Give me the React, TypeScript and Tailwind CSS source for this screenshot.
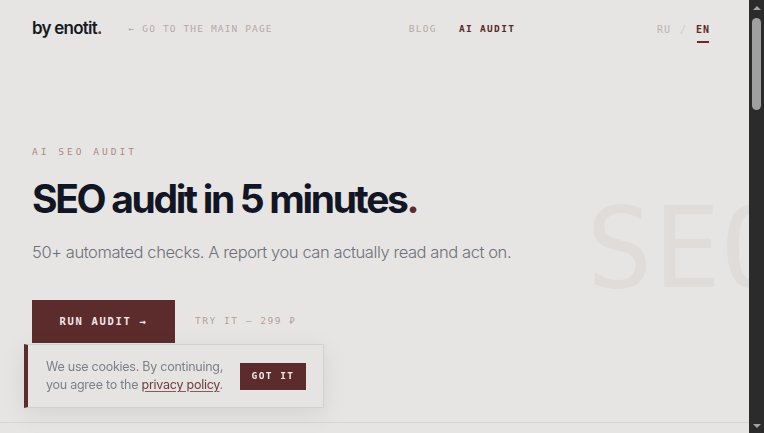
import { useState } from "react";

const mono = "font-['DejaVu_Sans_Mono','Liberation_Mono',monospace]";
const sans = "font-['Inter','Noto_Sans',sans-serif]";

/** Шапка сайта */
function Header() {
  return (
    <header className="flex items-center h-[58px] pl-8 pr-[39px]">
      <a className={`${sans} text-[17px] font-semibold tracking-[-0.045em] text-[#161a26]`}>
        by enotit<span className="text-[#6b2e2c]">.</span>
      </a>
      <a className={`${mono} ml-[27px] text-[9.5px] tracking-[0.12em] text-[#b8a7a5]`}>
        ← GO TO THE MAIN PAGE
      </a>

      <nav className={`${mono} ml-[136px] flex items-center gap-[22px] text-[9.5px] tracking-[0.14em]`}>
        <a className="text-[#b8a7a5]">BLOG</a>
        <a className="text-[#5c2a2a] font-bold">AI AUDIT</a>
      </nav>

      <div className={`${mono} ml-auto flex items-center gap-[9px] text-[10px] tracking-[0.1em]`}>
        <span className="text-[#bfb1af]">RU</span>
        <span className="text-[#d3c9c7]">/</span>
        <span className="relative font-bold text-[#5c2a2a]">
          EN
          <span className="absolute left-[1px] right-[1px] -bottom-[6px] h-[1.5px] bg-[#6b2a2a]" />
        </span>
      </div>
    </header>
  );
}

/** Плашка про cookies */
function CookieBanner({ onClose }: { onClose: () => void }) {
  return (
    <div className="fixed left-[24px] top-[344px] w-[300px] h-[64px] flex items-center border border-[#d3d1cf] border-l-[4px] border-l-[#5c2c2c] bg-[#e6e4e2] shadow-[0_6px_24px_rgba(0,0,0,0.08)] pl-[18px] pr-[17px]">
      <p className={`${sans} text-[12.5px] leading-[18px] tracking-[-0.02em] text-[#7c808a]`}>
        We use cookies. By continuing,
        <br />
        you agree to the{" "}
        <a className="text-[#6e3b3a] underline underline-offset-2 decoration-[#8a5a58]">privacy policy</a>.
      </p>
      <button
        onClick={onClose}
        className={`${mono} ml-auto h-[27px] w-[66px] bg-[#5c2c2c] text-[#f1e9e7] text-[9.5px] font-bold tracking-[0.15em]`}
      >
        GOT IT
      </button>
    </div>
  );
}

/** Полоса прокрутки окна (тёмная) */
function Scrollbar() {
  return (
    <aside className="w-[15px] shrink-0 bg-[#2b2b2b] flex flex-col items-center">
      <div className="h-[15px] flex items-center justify-center">
        <div className="w-0 h-0 border-l-[4px] border-r-[4px] border-b-[4px] border-l-transparent border-r-transparent border-b-[#a3a3a3]" />
      </div>
      <div className="flex-1 w-full px-[3px] pt-[3px]">
        <div className="h-[92px] rounded-full bg-[#a0a0a0]" />
      </div>
      <div className="h-[15px] flex items-center justify-center">
        <div className="w-0 h-0 border-l-[4px] border-r-[4px] border-t-[4px] border-l-transparent border-r-transparent border-t-[#a3a3a3]" />
      </div>
    </aside>
  );
}

export default function App() {
  const [cookies, setCookies] = useState(true);

  return (
    <div className="h-[433px] w-full flex overflow-hidden bg-[#e7e5e3]">
      <main className="relative flex-1 min-w-0 overflow-hidden">
        <Header />

        {/* Первый экран */}
        <section className="relative px-8 pt-[87px] h-[365px] border-b border-[#d7d5d3]">
          <span
            className={`${mono} absolute left-[586px] top-[134px] text-[112px] leading-none text-[#dfdcda] select-none`}
          >
            SEO
          </span>

          <div className="relative">
            <p className={`${mono} text-[9.5px] tracking-[0.32em] text-[#a98a86]`}>AI SEO AUDIT</p>
            <h1 className={`${sans} mt-[16px] text-[39px] leading-[48px] font-bold tracking-[-0.06em] text-[#121624]`}>
              SEO audit in 5 minutes<span className="text-[#5c2c2c]">.</span>
            </h1>
            <p className={`${sans} mt-[17px] text-[16.5px] font-light tracking-[-0.025em] text-[#6c707a]`}>
              50+ automated checks. A report you can actually read and act on.
            </p>

            <div className="mt-[35px] flex items-center gap-[20px]">
              <button
                className={`${mono} h-[43px] w-[143px] bg-[#5c2c2c] text-[#f1e9e7] text-[10.5px] font-bold tracking-[0.16em]`}
              >
                RUN AUDIT →
              </button>
              <a className={`${mono} text-[9.5px] tracking-[0.16em] text-[#b49f9b]`}>TRY IT — 299 ₽</a>
            </div>
          </div>
        </section>
      </main>

      <Scrollbar />

      {cookies && <CookieBanner onClose={() => setCookies(false)} />}
    </div>
  );
}
